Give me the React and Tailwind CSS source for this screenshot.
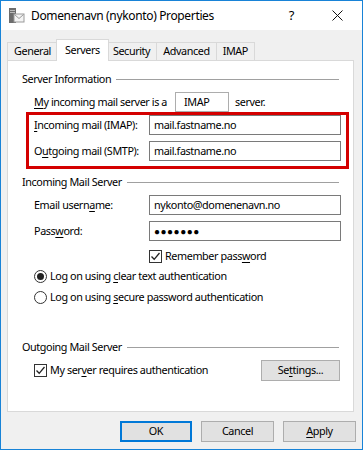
import React from 'react';

const font = { fontFamily: '"Noto Sans", "Open Sans", sans-serif' };

const U = ({ children }) => <span className="underline underline-offset-2">{children}</span>;

const GroupHeader = ({ title, className = '' }) => (
  <div className={`flex items-center h-[16px] pl-[14px] pr-[14px] ${className}`}>
    <span className="whitespace-nowrap">{title}</span>
    <div className="flex-1 h-px bg-[#a0a0a0] ml-[5px]" />
  </div>
);

const TextBox = ({ value, className = '' }) => (
  <div className={`h-[20px] border border-[#7a7a7a] bg-white flex items-center px-[4px] text-black ${className}`}>
    {value}
  </div>
);

const CheckBox = ({ checked }) => (
  <div className="w-[13px] h-[13px] border border-[#333] bg-white flex items-center justify-center shrink-0">
    {checked && (
      <svg width="11" height="11" viewBox="0 0 11 11">
        <path d="M1.5 5.5 L4.2 8.3 L9.5 2" fill="none" stroke="#222" strokeWidth="1.3" />
      </svg>
    )}
  </div>
);

const Radio = ({ checked }) => (
  <div className="w-[13px] h-[13px] rounded-full border border-[#333] bg-white flex items-center justify-center shrink-0">
    {checked && <div className="w-[7px] h-[7px] rounded-full bg-[#222]" />}
  </div>
);

const Button = ({ children, primary, className = '' }) => (
  <div
    className={`h-[21px] flex items-center justify-center text-black bg-[#e1e1e1] ${
      primary ? 'border-2 border-[#0078d7]' : 'border border-[#adadad]'
    } ${className}`}
  >
    {children}
  </div>
);

const Tab = ({ label, selected }) =>
  selected ? (
    <div className="relative z-10 -mb-px h-[22px] px-[8px] -mx-[2px] bg-white border border-b-0 border-[#d9d9d9] flex items-center text-black">
      {label}
    </div>
  ) : (
    <div className="h-[18px] px-[6px] bg-[#f0f0f0] border border-b-0 border-[#d9d9d9] -ml-px first:ml-0 flex items-center text-black">
      {label}
    </div>
  );

export default function App() {
  return (
    <div style={font} className="w-[363px] h-[450px] border border-[#1883d7] bg-[#f0f0f0] flex flex-col overflow-hidden text-[10.8px] tracking-[-0.4px]">
      {/* title bar */}
      <div className="h-[29px] bg-white flex items-center shrink-0">
        <svg className="ml-[7px]" width="17" height="17" viewBox="0 0 17 17">
          <rect x="1" y="1" width="7" height="15" fill="#6d6d6d" />
          <rect x="2" y="3" width="5" height="1" fill="#bbb" />
          <rect x="2" y="5" width="5" height="1" fill="#bbb" />
          <rect x="6" y="7" width="10" height="8" fill="#f4f4f4" stroke="#9a9a9a" />
          <path d="M6.5 7.5 L11 11.5 L15.5 7.5" fill="none" stroke="#9a9a9a" />
        </svg>
        <span className="ml-[6px] text-[12px] tracking-[-0.35px] text-black">Domenenavn (nykonto) Properties</span>
        <span className="ml-auto mr-[38px] text-[13px] text-black">?</span>
        <svg className="mr-[19px]" width="11" height="11" viewBox="0 0 11 11">
          <path d="M0.5 0.5 L10.5 10.5 M10.5 0.5 L0.5 10.5" stroke="#111" strokeWidth="1" />
        </svg>
      </div>

      {/* tabs */}
      <div className="flex items-end h-[22px] mt-[8px] ml-[6px]">
        <Tab label="General" />
        <Tab label="Servers" selected />
        <Tab label="Security" />
        <Tab label="Advanced" />
        <Tab label="IMAP" />
      </div>

      {/* panel */}
      <div className="ml-[6px] w-[347px] h-[352px] bg-white border border-[#d9d9d9] flex flex-col text-black">
        <GroupHeader title="Server Information" className="mt-[10px]" />

        <div className="flex items-center h-[20px] mt-[5px] pl-[26px]">
          <span className="w-[141px] whitespace-nowrap">
            <U>M</U>y incoming mail server is a
          </span>
          <div className="w-[54px] h-[20px] border border-[#adadad] flex items-center px-[8px]">IMAP</div>
          <span className="ml-[6px]">server.</span>
        </div>

        <div className="ml-[18px] w-[323px] border-[3px] border-[#d40000] flex flex-col gap-[6px] pb-[5px]">
          <div className="flex items-center pl-[5px]">
            <span className="w-[115px] whitespace-nowrap">
              <U>I</U>ncoming mail (IMAP):
            </span>
            <TextBox value="mail.fastname.no" className="w-[192px]" />
          </div>
          <div className="flex items-center pl-[5px]">
            <span className="w-[115px] whitespace-nowrap">
              O<U>u</U>tgoing mail (SMTP):
            </span>
            <TextBox value="mail.fastname.no" className="w-[192px]" />
          </div>
        </div>

        <GroupHeader title="Incoming Mail Server" className="mt-[5px]" />

        <div className="flex items-center mt-[5px] pl-[26px]">
          <span className="w-[115px]">
            Email usern<U>a</U>me:
          </span>
          <TextBox value="nykonto@domenenavn.no" className="w-[192px]" />
        </div>
        <div className="flex items-center mt-[6px] pl-[26px]">
          <span className="w-[115px]">
            Pass<U>w</U>ord:
          </span>
          <TextBox value="●●●●●●●" className="w-[192px] text-[10px] tracking-[0.5px]" />
        </div>
        <div className="flex items-center h-[16px] mt-[7px] pl-[141px] gap-[3px]">
          <CheckBox checked />
          <span>
            Remember pass<U>w</U>ord
          </span>
        </div>
        <div className="flex items-center h-[16px] mt-[4px] pl-[26px] gap-[3px]">
          <Radio checked />
          <span>
            Log on using <U>c</U>lear text authentication
          </span>
        </div>
        <div className="flex items-center h-[16px] mt-[5px] pl-[26px] gap-[3px]">
          <Radio />
          <span>
            Log on using <U>s</U>ecure password authentication
          </span>
        </div>

        <GroupHeader title="Outgoing Mail Server" className="mt-[34px]" />

        <div className="flex items-center h-[21px] mt-[5px] pl-[26px] pr-[13px] gap-[3px]">
          <CheckBox checked />
          <span>
            My ser<U>v</U>er requires authentication
          </span>
          <Button className="ml-auto w-[79px]">
            <span>
              Se<U>t</U>tings...
            </span>
          </Button>
        </div>
      </div>

      {/* bottom buttons */}
      <div className="flex justify-end gap-[9px] mt-[9px] mr-[6px]">
        <Button primary className="w-[72px]">OK</Button>
        <Button className="w-[73px]">Cancel</Button>
        <Button className="w-[73px]">
          <span>
            <U>A</U>pply
          </span>
        </Button>
      </div>
    </div>
  );
}
